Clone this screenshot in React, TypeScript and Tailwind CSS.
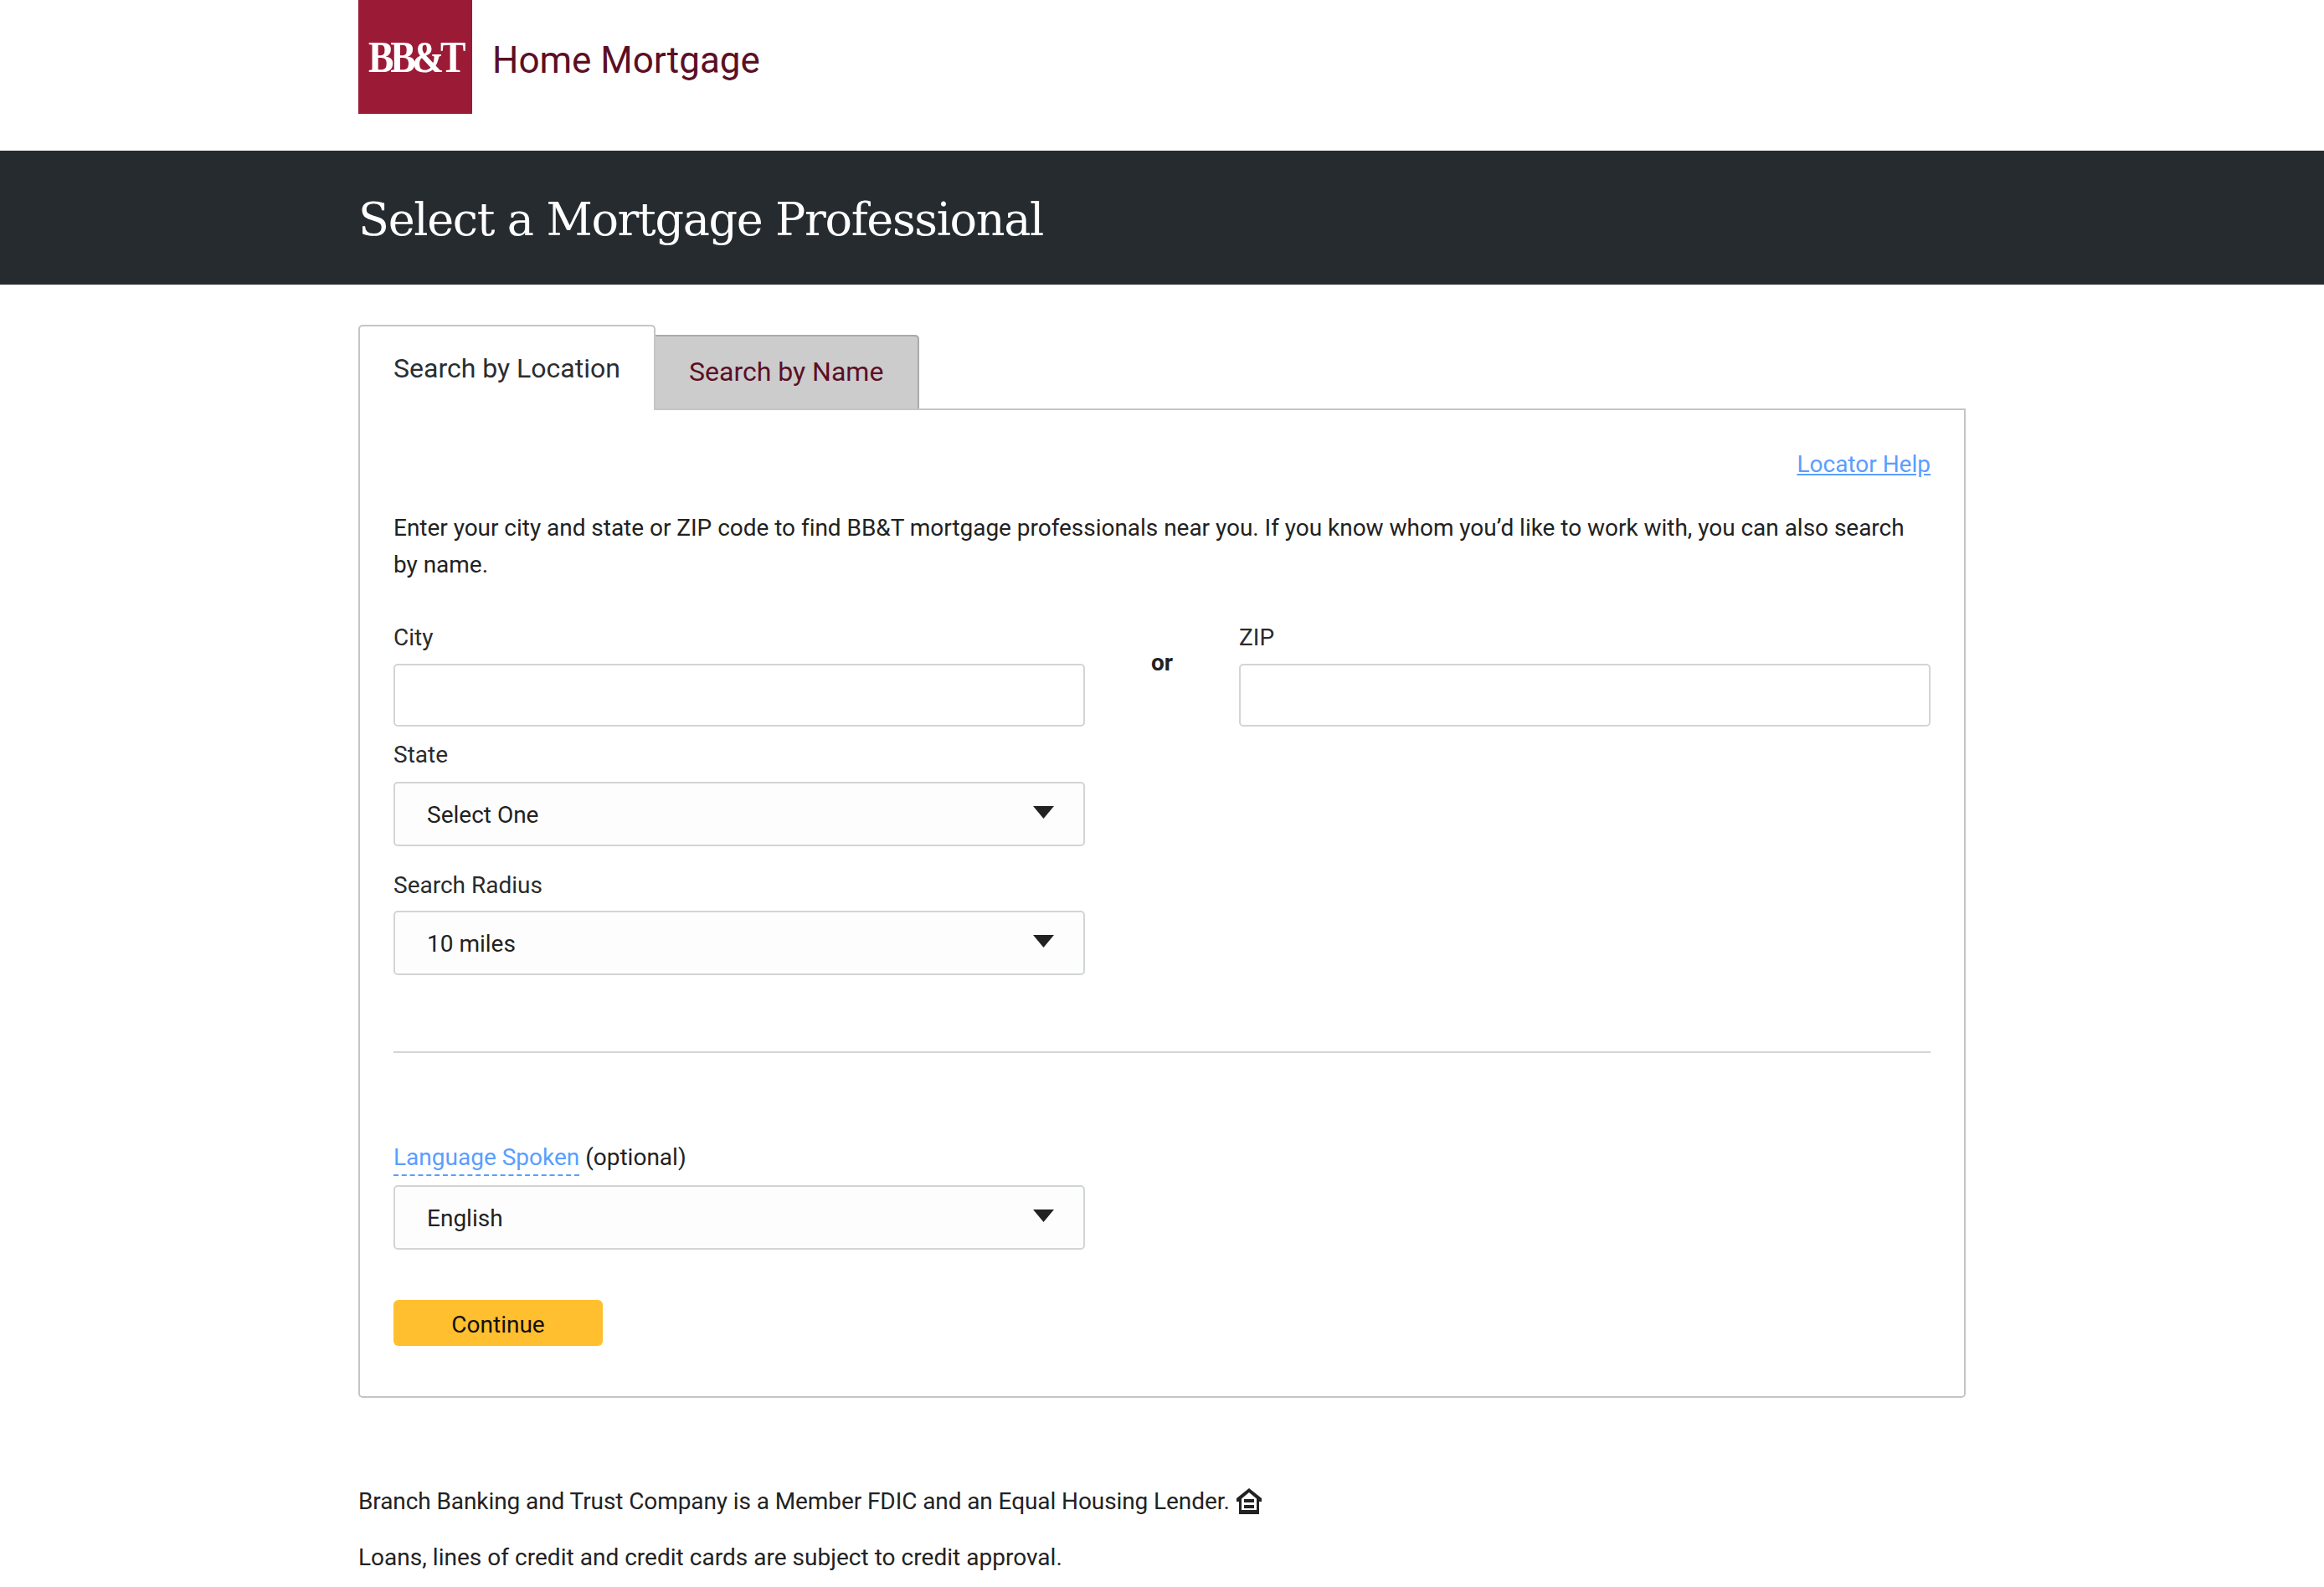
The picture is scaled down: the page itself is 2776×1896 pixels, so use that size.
const roboto = "font-['Roboto',sans-serif]";

function Caret() {
  return (
    <svg width="25" height="15" viewBox="0 0 25 15" className="absolute right-[35px] top-[27px]">
      <path d="M0 0H25L12.5 15Z" fill="#222222" />
    </svg>
  );
}

function SelectBox({ value, className }: { value: string; className?: string }) {
  return (
    <div className={`relative flex h-[77px] w-[826px] items-center rounded-[5px] border-2 border-[#d2d5d5] bg-[#fdfdfd] pl-[38px] pt-[3px] text-[28px] text-[#222] ${className ?? ""}`}>
      {value}
      <Caret />
    </div>
  );
}

function Label({ children }: { children: React.ReactNode }) {
  return <label className="block h-[44px] text-[28px] leading-[44px] text-[#2b2b2b]">{children}</label>;
}

function HousingIcon() {
  return (
    <svg width="30" height="31" viewBox="0 0 30 31" className="ml-[8px] inline-block align-[-6px]">
      <path d="M15 0 30 12V16H27V31H3V16H0V12Z" fill="#222222" />
      <path d="M15 5 24 12.5V26H6V12.5Z" fill="#ffffff" />
      <rect x="9" y="13" width="12" height="4" fill="#222222" />
      <rect x="9" y="20" width="12" height="4" fill="#222222" />
    </svg>
  );
}

export default function App() {
  return (
    <div className={`min-h-[1896px] bg-white ${roboto}`}>
      <header className="h-[180px] pl-[428px]">
        <div className="flex items-center">
          <div className="flex h-[136px] w-[136px] items-center justify-center bg-[#9b1b37] font-['Liberation_Serif',serif] text-white">
            <span className="inline-block scale-x-[0.86] text-[53px] leading-none font-bold tracking-[-5px]">BB&amp;T</span>
          </div>
          <span className="ml-[24px] pt-[7px] text-[44px] text-[#5c0f24]">Home Mortgage</span>
        </div>
      </header>

      <div className="flex h-[160px] items-center bg-[#262b2f] pl-[428px] pt-[4px]">
        <h1 className="font-['DejaVu_Serif',serif] text-[54px] tracking-[-1.35px] text-white">Select a Mortgage Professional</h1>
      </div>

      <main className="ml-[428px] w-[1920px] pt-[48px]">
        <div className="relative z-10 flex items-end">
          <div className="-mb-[2px] flex h-[102px] w-[355px] items-start rounded-t-[5px] border-2 border-b-0 border-[#c4c6c6] bg-white pl-[40px] pt-[28px] text-[32px] leading-[44px] text-[#2a2e31]">
            Search by Location
          </div>
          <div className="flex h-[88px] w-[315px] items-start rounded-tr-[5px] border-t-2 border-r-2 border-[#aaaaaa] bg-[#cccccc] pl-[40px] pt-[20px] text-[32px] leading-[44px] text-[#5c0f24]">
            Search by Name
          </div>
        </div>

        <section className="h-[1182px] rounded-b-[5px] border-2 border-[#c4c6c6] px-[40px] pt-[43px]">
          <div className="text-right">
            <a className="text-[28px] leading-[44px] text-[#5a9eff] underline">Locator Help</a>
          </div>
          <p className="mt-[32px] text-[28px] leading-[44px] tracking-[-0.03px] text-[#222]">
            Enter your city and state or ZIP code to find BB&amp;T mortgage professionals near you. If you know whom you’d like to work with, you can also search by name.
          </p>

          <div className="mt-[43px] flex">
            <div className="w-[826px]">
              <Label>City</Label>
              <input className="mt-[9px] block h-[75px] w-full rounded-[5px] border-2 border-[#d2d5d5] bg-white" />
            </div>
            <div className="w-[184px] pt-[30px] text-center text-[28px] font-bold leading-[44px] text-[#222]">or</div>
            <div className="w-[826px]">
              <Label>ZIP</Label>
              <input className="mt-[9px] block h-[75px] w-full rounded-[5px] border-2 border-[#d2d5d5] bg-white" />
            </div>
          </div>

          <div className="mt-[12px]">
            <Label>State</Label>
            <SelectBox value="Select One" className="mt-[10px]" />
          </div>
          <div className="mt-[25px]">
            <Label>Search Radius</Label>
            <SelectBox value="10 miles" className="mt-[8px]" />
          </div>

          <hr className="mt-[91px] border-t-2 border-[#d2d5d5]" />

          <div className="mt-[103px] text-[28px] leading-[44px] text-[#222]">
            <span className="inline-block h-[44px] border-b-2 border-dashed border-[#5a9eff] text-[#5a9eff]">Language Spoken</span>{" "}
            (optional)
          </div>
          <SelectBox value="English" className="mt-[11px]" />

          <button className="mt-[60px] block h-[55px] w-[250px] rounded-[6px] bg-[#ffbf2f] pt-[4px] text-[28px] text-[#111]">Continue</button>
        </section>

        <footer className="pt-[102px] text-[28px] leading-[44px] text-[#222]">
          <p className="tracking-[-0.09px]">
            Branch Banking and Trust Company is a Member FDIC and an Equal Housing Lender.
            <HousingIcon />
          </p>
          <p className="mt-[23px] tracking-[0.025px]">Loans, lines of credit and credit cards are subject to credit approval.</p>
        </footer>
      </main>
    </div>
  );
}
